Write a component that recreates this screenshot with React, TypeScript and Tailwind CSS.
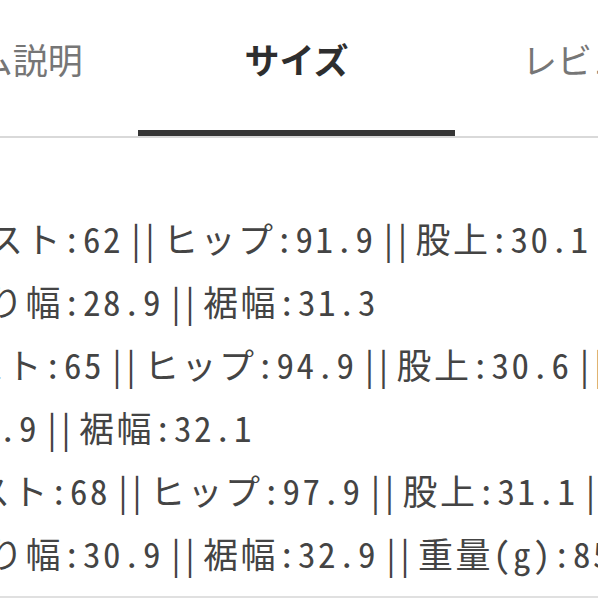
import React from "react";

const tabs = [
  { label: "アイテム説明", active: false },
  { label: "サイズ", active: true },
  { label: "レビュー(8)", active: false },
];

const rows: { text: string; cls: string }[] = [
  { text: "スト:62||ヒップ:91.9||股上:30.1||", cls: "ml-[-12px]" },
  { text: "り幅:28.9||裾幅:31.3", cls: "ml-[-12px]" },
  { text: "スト:65||ヒップ:94.9||股上:30.6||", cls: "ml-[-31px]" },
  { text: "29.9||裾幅:32.1", cls: "ml-[-41px]" },
  { text: "スト:68||ヒップ:97.9||股上:31.1||", cls: "ml-[-25px]" },
  { text: "り幅:30.9||裾幅:32.9||重量(g):85", cls: "ml-[-12px]" },
];

// "||" keeps two half-width cells of room, with its bars set 14px apart
function Sep() {
  return (
    <>
      <span className="pl-[4.25px] tracking-[-3.5px]">|</span>
      <span className="tracking-[4.25px]">|</span>
    </>
  );
}

function Line({ text }: { text: string }) {
  const parts = text.split("||");
  return (
    <>
      {parts.map((p, i) => (
        <React.Fragment key={i}>
          {i > 0 && <Sep />}
          {p}
        </React.Fragment>
      ))}
    </>
  );
}

export default function App() {
  return (
    <div className="w-[598px] h-[598px] overflow-hidden bg-white">
      <nav className="flex ml-[-179px] w-[951px] border-b-2 border-[#d9d9d9]">
        {tabs.map((t) => (
          <div
            key={t.label}
            className="w-[317px] h-[136px] flex flex-col items-center justify-between shrink-0"
          >
            <span
              className={
                "pt-[41px] text-[35px] leading-[35px] whitespace-nowrap [font-family:'Noto_Sans_CJK_JP','Noto_Sans',sans-serif] " +
                (t.active ? "font-bold text-[#2e2e2e]" : "font-normal text-[#767676]")
              }
            >
              {t.label}
            </span>
            <div className={t.active ? "w-full h-[6px] bg-[#353535]" : "w-full h-[6px]"} />
          </div>
        ))}
      </nav>
      <section className="h-[460px] border-b-2 border-[#e0e0e0] pt-[68px] overflow-hidden">
        <div className="text-[35px] leading-[63px] tracking-[2.5px] text-[#444444] [font-family:'Noto_Sans_Mono_CJK_JP','Noto_Sans_CJK_JP',monospace] [font-feature-settings:'hwid']">
          {rows.map((r, i) => (
            <div key={i} className={"whitespace-nowrap " + r.cls}>
              <Line text={r.text} />
            </div>
          ))}
        </div>
      </section>
    </div>
  );
}
